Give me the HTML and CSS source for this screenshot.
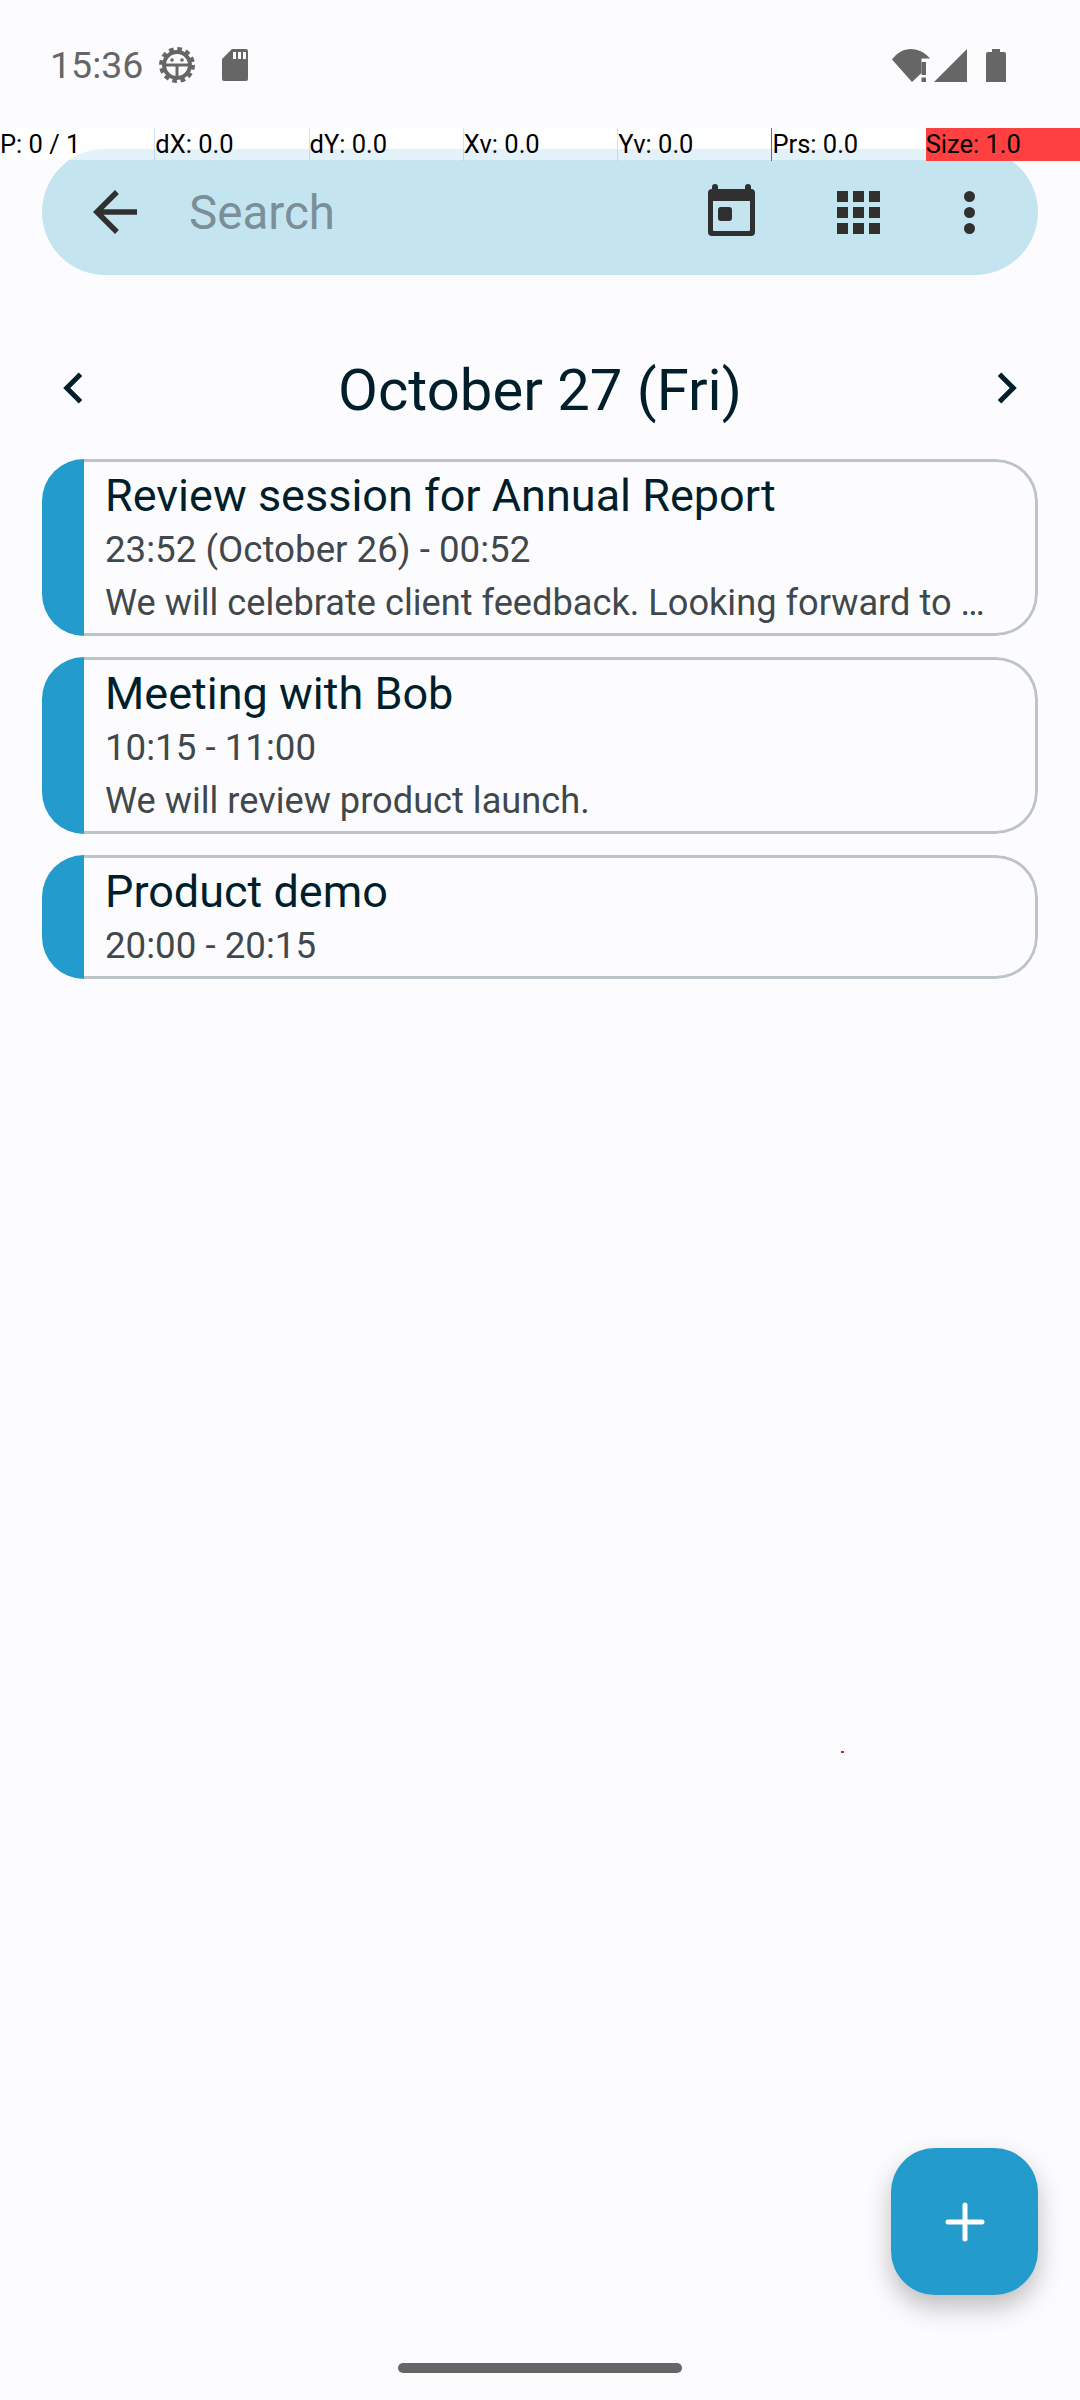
FILE: index.html
```html
<!DOCTYPE html>
<html lang="en">
<head>
    <meta charset="UTF-8">
    <meta name="viewport" content="width=device-width, initial-scale=1.0">
    <title>Day view</title>
    <link rel="stylesheet" href="styles.css">
</head>
<body>
<div class="screen">
    <div class="status-bar">
        <span class="clock">15:36</span>
        <svg class="status-icon gear" width="36" height="36" viewBox="0 0 36 36">
            <circle cx="18" cy="18" r="15.5" fill="none" stroke="#666" stroke-width="5" stroke-dasharray="4.5 3.6"/>
            <circle cx="18" cy="18" r="13" fill="none" stroke="#666" stroke-width="4"/>
            <path d="M6 18h24M18 18v12" stroke="#666" stroke-width="3" fill="none"/>
            <circle cx="13" cy="13" r="1.8" fill="#666"/>
            <circle cx="23" cy="13" r="1.8" fill="#666"/>
        </svg>
        <svg class="status-icon sd" width="26" height="32" viewBox="0 0 26 32">
            <path d="M10 0h14a2 2 0 0 1 2 2v28a2 2 0 0 1-2 2H2a2 2 0 0 1-2-2V10z" fill="#666"/>
            <path d="M11 3h3v7h-3zM16 3h3v7h-3zM21 3h3v7h-3z" fill="#fcfcff"/>
        </svg>
        <span class="status-space"></span>
        <svg class="status-icon wifi" width="38" height="33" viewBox="0 0 38 33">
            <path d="M0 10.500C5 4 11.500 0 19 0c7 0 14 3.500 19 9.500h-8.500V24l-9.500 9z" fill="#666"/>
            <path d="M29.500 13h4.500v13h-4.500zM29.500 28.500h4.500V33h-4.500z" fill="#666"/>
        </svg>
        <svg class="status-icon signal" width="33" height="33" viewBox="0 0 33 33">
            <path d="M33 0v33H0z" fill="#666"/>
        </svg>
        <svg class="status-icon battery" width="20" height="33" viewBox="0 0 20 33">
            <path d="M6 0h8v3h4a2 2 0 0 1 2 2v28H0V5a2 2 0 0 1 2-2h4z" fill="#666"/>
        </svg>
    </div>

    <div class="search-bar">
        <svg class="back-icon" width="66" height="66" viewBox="0 0 24 24">
            <path d="M20 11H7.830l5.590-5.590L12 4l-8 8 8 8 1.410-1.410L7.830 13H20v-2z" fill="#303030"/>
        </svg>
        <span class="search-text">Search</span>
        <svg class="today-icon" width="47" height="52" viewBox="0 0 47 52">
            <path d="M7 0a3 3 0 0 1 3 3v2h27V3a3 3 0 0 1 6 0v2a4 4 0 0 1 4 4v39a4 4 0 0 1-4 4H4a4 4 0 0 1-4-4V9a4 4 0 0 1 4-4V3a3 3 0 0 1 3-3zM5 17v29a1 1 0 0 0 1 1h35a1 1 0 0 0 1-1V17z" fill="#303030"/>
            <rect x="10" y="23" width="14" height="14" rx="3" fill="#303030"/>
        </svg>
        <div class="grid-icon">
            <i></i><i></i><i></i><i></i><i></i><i></i><i></i><i></i><i></i>
        </div>
        <div class="more-icon"><i></i><i></i><i></i></div>
    </div>

    <div class="day-header">
        <svg class="chevron" width="60" height="60" viewBox="0 0 24 24">
            <path d="M15 6.500L9.500 12l5.500 5.500" fill="none" stroke="#001f2a" stroke-width="2"/>
        </svg>
        <h1 class="day-title">October 27 (Fri)</h1>
        <svg class="chevron" width="60" height="60" viewBox="0 0 24 24">
            <path d="M9 6.500l5.500 5.500L9 17.500" fill="none" stroke="#001f2a" stroke-width="2"/>
        </svg>
    </div>

    <div class="event-list">
        <div class="event">
            <div class="event-color"></div>
            <div class="event-body">
                <div class="event-title">Review session for Annual Report</div>
                <div class="event-time">23:52 (October 26) - 00:52</div>
                <div class="event-desc">We will celebrate client feedback. Looking forward to …</div>
            </div>
        </div>
        <div class="event">
            <div class="event-color"></div>
            <div class="event-body">
                <div class="event-title">Meeting with Bob</div>
                <div class="event-time">10:15 - 11:00</div>
                <div class="event-desc">We will review product launch.</div>
            </div>
        </div>
        <div class="event">
            <div class="event-color"></div>
            <div class="event-body">
                <div class="event-title">Product demo</div>
                <div class="event-time">20:00 - 20:15</div>
            </div>
        </div>
    </div>

    <!-- pointer location overlay -->
    <div class="pointer-strip">
        <span>P: 0 / 1</span>
        <span class="tick">dX: 0.0</span>
        <span class="tick">dY: 0.0</span>
        <span class="tick">Xv: 0.0</span>
        <span class="tick">Yv: 0.0</span>
        <span class="tick tick-red">Prs: 0.0</span>
        <span class="size-cell">Size: 1.0</span>
    </div>
    <div class="pointer-dot"></div>

    <button class="fab">
        <svg width="40" height="40" viewBox="0 0 40 40">
            <path d="M20 3v34M3 20h34" stroke="#fff" stroke-width="5" stroke-linecap="round" fill="none"/>
        </svg>
    </button>

    <div class="nav-bar"><div class="home-pill"></div></div>
</div>
</body>
</html>
```

FILE: styles.css
```css
* {
    box-sizing: border-box;
}
body {
    margin: 0;
    padding: 0;
    font-family: Roboto, "Liberation Sans", sans-serif;
    background-color: #fcfcff;
}
.screen {
    position: relative;
    width: 1080px;
    height: 2400px;
    overflow: hidden;
    background-color: #fcfcff;
}

/* status bar */
.status-bar {
    display: flex;
    align-items: center;
    height: 130px;
    padding: 0 74px 0 50px;
}
.clock {
    font-size: 37.500px;
    color: #666;
    width: 109px;
}
.sd {
    margin-left: 27px;
}
.status-space {
    flex: 1;
}
.signal {
    margin-left: 4px;
}
.battery {
    margin-left: 19px;
}

/* search bar */
.search-bar {
    display: flex;
    align-items: center;
    height: 126px;
    margin: 19px 42px 0;
    padding-left: 40px;
    border-radius: 63px;
    background-color: #c4e4f0;
}
.search-text {
    flex: 1;
    margin-left: 41px;
    padding-top: 2px;
    font-size: 47.500px;
    color: #7a8f98;
}
.today-icon {
    margin-top: -4px;
}
.grid-icon {
    display: grid;
    grid-template-columns: repeat(3, 11px);
    grid-auto-rows: 11px;
    gap: 5px;
    margin-left: 82px;
}
.grid-icon i {
    background-color: #303030;
}
.more-icon {
    display: flex;
    flex-direction: column;
    gap: 5px;
    margin-left: 84px;
    margin-right: 63px;
}
.more-icon i {
    width: 11px;
    height: 11px;
    border-radius: 50%;
    background-color: #303030;
}

/* day header */
.day-header {
    display: flex;
    align-items: center;
    justify-content: space-between;
    height: 90px;
    margin-top: 68px;
    padding: 0 43px;
}
.day-title {
    margin: 0;
    padding-top: 3px;
    font-size: 58px;
    font-weight: 400;
    color: #001f2a;
}

/* events */
.event-list {
    display: flex;
    flex-direction: column;
    gap: 21px;
    margin: 26px 42px 0;
}
.event {
    display: flex;
    border-radius: 42px;
    overflow: hidden;
}
.event-color {
    flex: none;
    width: 42px;
    background-color: #239ccd;
}
.event-body {
    flex: 1;
    min-width: 0;
    padding: 8px 20px 9px 21px;
    border: 3px solid #bcc4c9;
    border-left: none;
    border-radius: 0 42px 42px 0;
}
.event-title {
    font-size: 45px;
    line-height: 52px;
    color: #001f2a;
}
.event-time {
    margin-top: 7px;
    font-size: 36.700px;
    line-height: 42px;
    color: #40484c;
}
.event-desc {
    margin-top: 11px;
    font-size: 36.200px;
    line-height: 42px;
    color: #40484c;
    white-space: nowrap;
}

/* pointer location strip, drawn over the search bar */
.pointer-strip {
    position: absolute;
    top: 128px;
    left: 0;
    width: 1080px;
    height: 32px;
    display: grid;
    grid-template-columns: repeat(7, 1fr);
    background-color: rgba(255, 255, 255, 0.5);
    font-size: 25.500px;
    line-height: 33px;
    color: #000;
    white-space: nowrap;
}
.tick {
    border-left: 1px solid rgba(100, 170, 210, 0.3);
}
.tick-red {
    border-left-color: #d04050;
}
.size-cell {
    background-color: #ff4040;
}
.pointer-dot {
    position: absolute;
    left: 841px;
    top: 1751px;
    width: 3px;
    height: 2px;
    background-color: #d02030;
}

/* add button */
.fab {
    position: absolute;
    left: 891px;
    top: 2148px;
    width: 147px;
    height: 147px;
    display: flex;
    align-items: center;
    justify-content: center;
    padding: 0;
    border: none;
    border-radius: 44px;
    background-color: #239ccd;
    box-shadow: 0 12px 26px rgba(0, 0, 0, 0.25);
}

/* gesture bar, cuts off the button shadow */
.nav-bar {
    position: absolute;
    left: 0;
    bottom: 0;
    width: 1080px;
    height: 63px;
    display: flex;
    justify-content: center;
    padding-top: 26px;
    background-color: #fcfcff;
}
.home-pill {
    width: 284px;
    height: 10px;
    border-radius: 5px;
    background-color: #666;
}
```
